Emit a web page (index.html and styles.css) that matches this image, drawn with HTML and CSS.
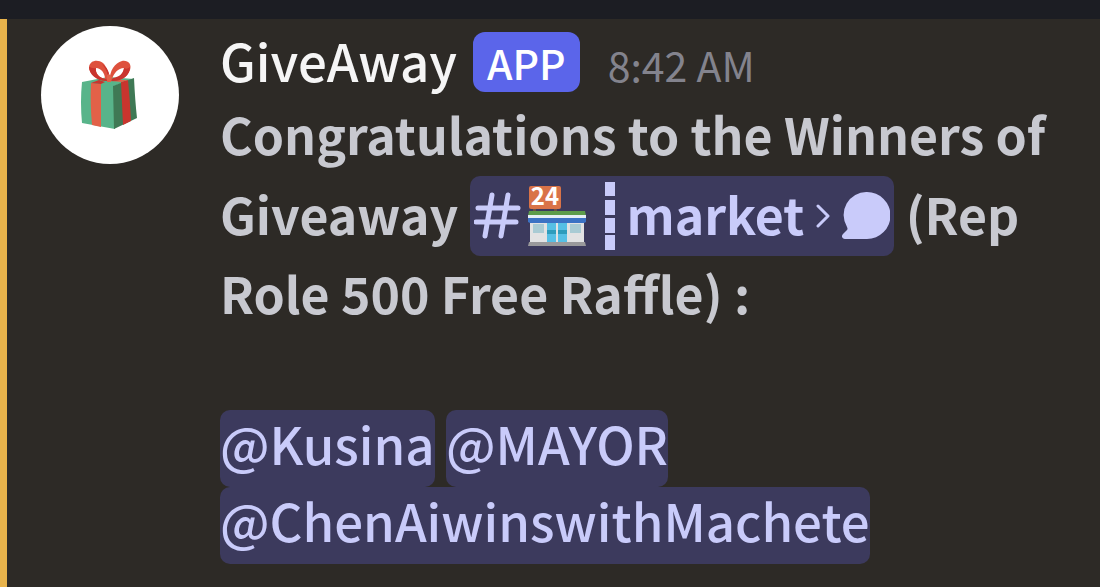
FILE: index.html
```html
<!DOCTYPE html>
<html lang="en">
<head>
  <meta charset="utf-8">
  <title>GiveAway</title>
  <link rel="stylesheet" href="styles.css">
</head>
<body>
  <div class="top-strip"></div>
  <main class="message">
    <div class="avatar">
      <svg class="gift" viewBox="0 0 58 70" role="img" aria-label="Gift">
        <path fill="#58b48a" d="M1 22 L27 17 L53 19 L33 26 L34 69 L1 63 Q-1 42 1 22Z"/>
        <path fill="#3f7955" d="M32 26 L53 18 Q54 40 56 58 L33 69Z"/>
        <path fill="#e26148" d="M10 23 L20 24 L20 67 L11 65 Q9 43 10 23Z"/>
        <path fill="#c9352e" d="M10 23 L18 20 L24 22 L20 24Z M40 22 L47 20 Q49 40 50 61 L42 65Z"/>
        <path fill="#e26148" d="M31 21 L39 20 L47 20 L40 22Z"/>
        <path fill="#de513d" fill-rule="evenodd" d="M27 21 C17 21 8 14 8 7 C9 0 17 -1 22 3 C26 7 28 13 28 21Z M24 19 C24 13 20 8 15 8 C14 13 18 18 24 19Z"/>
        <path fill="#c9352e" d="M8 7 C8 15 17 22 27 21 L25 19 C18 18 14 13 15 8 C12 9 10 7 8 7Z M27 21 Q28 12 21 4 Q26 7 28 13Z"/>
        <path fill="#de513d" fill-rule="evenodd" d="M29 21 C28 11 34 3 41 1 C47 0 51 4 49 10 C46 18 38 22 29 21Z M31 19 C38 18 43 14 43 8 C37 8 33 13 31 19Z"/>
        <path fill="#c9352e" d="M49 7 C49 16 40 22 30 21 L32 18 C38 17 42 14 43 8 Q46 10 49 7Z"/>
        <path fill="#e26148" d="M26 15 Q29 13 31 17 L30 22 L26 22Z"/>
      </svg>
    </div>
    <article class="content">
      <header class="author-row">
        <span class="author">GiveAway</span>
        <span class="app-tag">APP</span>
        <time class="time">8:42 AM</time>
      </header>
      <p class="text">
        <strong>Congratulations to the Winners of<br>
        Giveaway <a class="channel" href="#market">
          <svg class="hash" viewBox="0 0 48 48" aria-hidden="true">
            <path d="M18 3 L11 44 M34 3 L27 44 M4 16 H44 M2 30 H42"/>
          </svg>
          <svg class="store" viewBox="0 0 60 62" role="img" aria-label="24 hour store">
            <path fill="#6b5147" d="M6 23h3v4H6zM27 23h3v4h-3z"/>
            <rect x="2" y="1" width="32" height="23" rx="2" fill="#d97348"/>
            <text class="store-sign" x="18" y="20" text-anchor="middle">24</text>
            <rect x="3" y="35" width="54" height="23" fill="#e2e2e3"/>
            <path fill="#5d9c4b" d="M2 26h56l1 5H1z"/>
            <path fill="#e6eff5" d="M1 30h58v4H1z"/>
            <path fill="#3b72c4" d="M1 33h58v4l-2 1H3l-2-1z"/>
            <path fill="#a9cbd4" d="M6 39h11v9H6zM43 39h11v9H43z"/>
            <path fill="#56bfe5" d="M20 38h9v20h-9zM31 38h9v20h-9z"/>
            <path fill="#2e9cbc" d="M20 45h9v4h-9zM31 45h9v4h-9z"/>
            <path fill="#99999b" d="M2 57h56l1 4H1z"/>
          </svg>
          <svg class="divider" viewBox="0 0 10 68" aria-hidden="true">
            <path d="M0 0h10v14H0zM0 18h10v15H0zM0 36h10v15H0zM0 53h10v15H0z"/>
          </svg>
          <span class="channel-name">market</span>
          <svg class="chevron" viewBox="0 0 14 24" aria-hidden="true">
            <path d="M2 2 L12 12 L2 22"/>
          </svg>
          <svg class="bubble" viewBox="0 0 48 48" aria-hidden="true">
            <path d="M25 0 A23 23 0 0 1 25 47 H3 C0 47 -1 44 1 42 L5 38 Q6 37 5 35 A23 23 0 0 1 25 0Z"/>
          </svg>
        </a> (Rep<br>
        Role 500 Free Raffle) :</strong>
      </p>
      <p class="text winners">
        <a class="mention" href="#kusina">@Kusina</a>
        <a class="mention" href="#mayor">@MAYOR</a><br>
        <a class="mention" href="#chen">@ChenAiwinswithMachete</a>
      </p>
    </article>
  </main>
</body>
</html>
```
FILE: styles.css
```css
body {
  margin: 0;
  background-color: #2d2a26;
  font-family: "Noto Sans CJK SC", "Noto Sans", sans-serif;
  color: #c8c9d0;
}
.top-strip {
  height: 19px;
  background-color: #1c1d23;
}
.message {
  display: flex;
  gap: 41px;
  box-sizing: border-box;
  min-height: calc(100vh - 19px);
  padding: 7px 34px 20px;
  border-left: 7px solid #e8b34b;
}
.avatar {
  display: flex;
  flex-shrink: 0;
  align-items: center;
  justify-content: center;
  width: 138px;
  height: 138px;
  border-radius: 50%;
  background-color: #fff;
}
.gift {
  width: 58px;
  height: 70px;
}
.content {
  flex: 1;
  white-space: nowrap;
}
.author-row {
  display: flex;
  align-items: baseline;
  height: 68px;
  line-height: 68px;
}
.author {
  margin-right: 16px;
  font-size: 51px;
  font-weight: 500;
  color: #f5f5f5;
}
.app-tag {
  align-self: flex-start;
  margin: 6px 28px 0 0;
  padding: 0 14px;
  border-radius: 12px;
  background-color: #5b65ea;
  color: #fff;
  font-size: 41px;
  font-weight: 500;
  line-height: 60px;
}
.time {
  font-size: 41px;
  color: #83838d;
}
.text {
  margin: 0;
  font-size: 50px;
  line-height: 78px;
}
.winners {
  margin-top: 79px;
  font-size: 51px;
  line-height: 67px;
}
.channel,
.mention {
  border-radius: 10px;
  background-color: #3c3a5d;
  color: #c9cbfa;
  text-decoration: none;
}
.channel {
  display: inline-flex;
  align-items: center;
  box-sizing: border-box;
  height: 80px;
  margin: 4px 0 -3px;
  padding: 0 4px;
}
.channel-name {
  align-self: baseline;
  line-height: 74px;
}
.mention {
  display: inline-block;
  padding-bottom: 10px;
  font-weight: 500;
}
.hash {
  width: 48px;
  height: 48px;
  margin-right: 5px;
  fill: none;
  stroke: #c9cbfa;
  stroke-width: 5;
  stroke-linecap: round;
}
.store {
  width: 60px;
  height: 62px;
  margin-right: 18px;
  overflow: visible;
}
.store-sign {
  fill: #fff;
  font-size: 24px;
  font-weight: 700;
}
.divider {
  width: 10px;
  height: 68px;
  margin-right: 12px;
  fill: #c9cbfa;
}
.chevron {
  width: 14px;
  height: 24px;
  margin: 0 12px;
  fill: none;
  stroke: #c9cbfa;
  stroke-width: 3;
  stroke-linecap: round;
  stroke-linejoin: round;
}
.bubble {
  width: 48px;
  height: 48px;
  fill: #c9cbfa;
}
```
